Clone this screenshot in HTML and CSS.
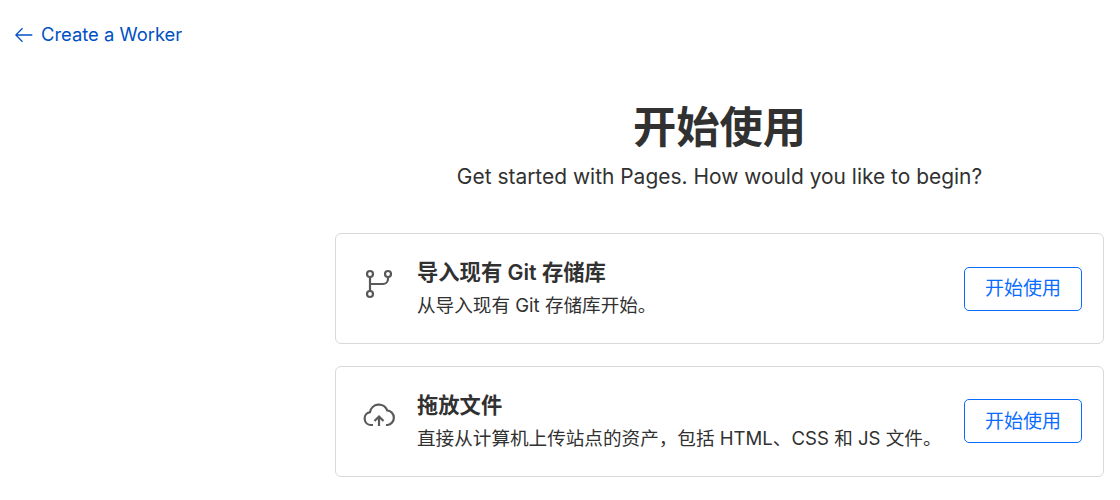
FILE: index.html
```html
<!DOCTYPE html>
<html lang="zh-CN">
<head>
    <meta charset="UTF-8">
    <meta name="viewport" content="width=device-width, initial-scale=1.0">
    <title>开始使用</title>
    <link rel="stylesheet" href="styles.css">
</head>
<body>
    <a class="back-link" href="#">
        <svg class="back-icon" viewBox="0 0 18 18" fill="none" stroke="currentColor" stroke-width="1.3">
            <path d="M17.300 9H.8M7.500 2.300L.8 9l6.700 6.700"/>
        </svg>
        <span>Create a Worker</span>
    </a>
    <main class="content">
        <h1>开始使用</h1>
        <p class="subtitle">Get started with Pages. How would you like to begin?</p>
        <div class="card">
            <svg class="card-icon" viewBox="0 0 32 32" fill="none" stroke="currentColor" stroke-width="2.200">
                <circle cx="7" cy="6" r="3"/>
                <circle cx="7" cy="26" r="3"/>
                <circle cx="25" cy="6" r="3"/>
                <path d="M7 9v14M25 9v2a5 5 0 0 1-5 5H7"/>
            </svg>
            <div class="card-text">
                <h2>导入现有 Git 存储库</h2>
                <p>从导入现有 Git 存储库开始。</p>
            </div>
            <button class="start-btn">开始使用</button>
        </div>
        <div class="card">
            <svg class="card-icon" viewBox="0 0 32 32" fill="none" stroke="currentColor" stroke-width="2.200">
                <path d="M10 25H8a6.500 6.500 0 0 1-1-12.900A9 9 0 0 1 24.300 10.500 7.300 7.300 0 0 1 24.500 25H23"/>
                <path d="M16 26V17M11.500 21l4.500-4.500 4.500 4.500"/>
            </svg>
            <div class="card-text">
                <h2>拖放文件</h2>
                <p>直接从计算机上传站点的资产，包括 HTML、CSS 和 JS 文件。</p>
            </div>
            <button class="start-btn">开始使用</button>
        </div>
    </main>
</body>
</html>
```
FILE: styles.css
```css
* {
    margin: 0;
    padding: 0;
    box-sizing: border-box;
}
body {
    font-family: Inter, "Noto Sans CJK SC", sans-serif;
    background: #fff;
    color: #313131;
    height: 500px;
    overflow: hidden;
    padding: 23px 15px 0;
}
.back-link {
    display: flex;
    align-items: center;
    gap: 8px;
    height: 22px;
    color: #0051c3;
    font-size: 18.4px;
    text-decoration: none;
}
.back-icon {
    width: 18px;
    height: 18px;
    margin-top: 2px;
}
.content {
    width: 769px;
    margin: 54px 0 0 320px;
}
h1 {
    font-size: 43.300px;
    line-height: 56px;
    font-weight: 700;
    text-align: center;
}
.subtitle {
    font-size: 20.950px;
    line-height: 28px;
    text-align: center;
    margin: 8px 0 42.400px;
}
.card {
    display: flex;
    align-items: center;
    height: 110.670px;
    margin-bottom: 22px;
    padding: 0 21px 0 27px;
    background: #fff;
    border: 1px solid #d9d9d9;
    border-radius: 6px;
}
.card-icon {
    width: 32px;
    height: 32px;
    margin-bottom: 10px;
    color: #595959;
    flex-shrink: 0;
}
.card-text {
    flex: 1;
    margin-left: 22px;
}
.card-text h2 {
    font-size: 21.300px;
    line-height: 28px;
    font-weight: 600;
}
.card-text p {
    font-size: 18.600px;
    line-height: 28px;
    margin-top: 5px;
}
.start-btn {
    width: 118px;
    height: 44px;
    padding-bottom: 4px;
    background: #fff;
    color: #0a6cff;
    border: 1px solid #0a6cff;
    border-radius: 5px;
    font-family: inherit;
    font-size: 19px;
}
```
